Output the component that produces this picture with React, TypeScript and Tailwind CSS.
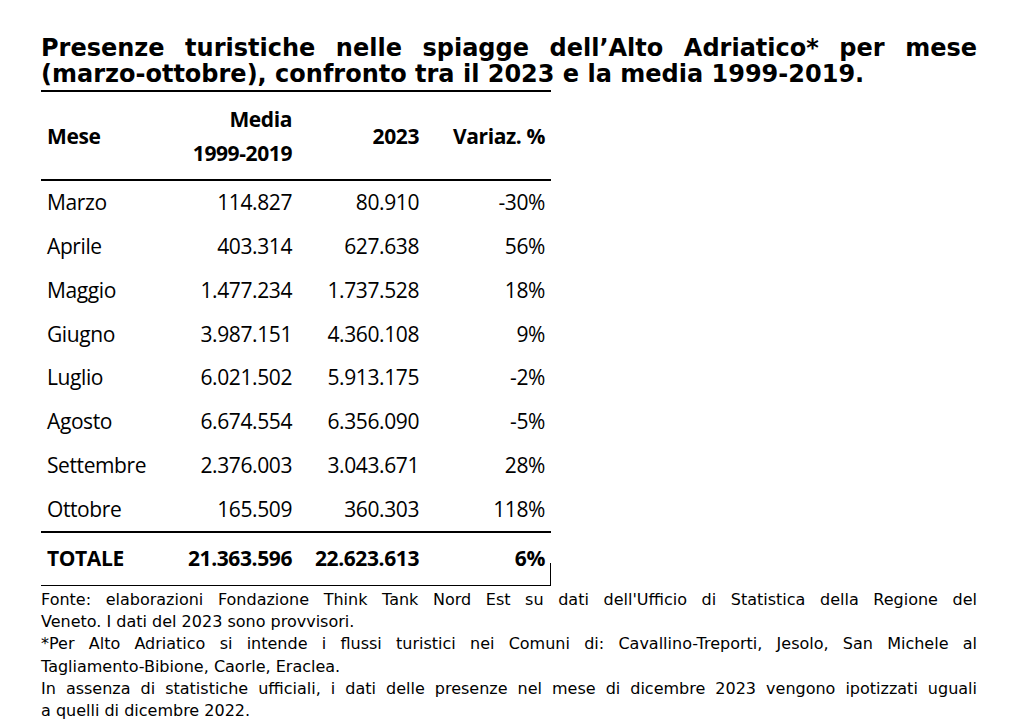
import React from 'react';

interface Riga {
  mese: string;
  media: string;
  anno: string;
  variaz: string;
}

const righe: Riga[] = [
  { mese: 'Marzo', media: '114.827', anno: '80.910', variaz: '-30%' },
  { mese: 'Aprile', media: '403.314', anno: '627.638', variaz: '56%' },
  { mese: 'Maggio', media: '1.477.234', anno: '1.737.528', variaz: '18%' },
  { mese: 'Giugno', media: '3.987.151', anno: '4.360.108', variaz: '9%' },
  { mese: 'Luglio', media: '6.021.502', anno: '5.913.175', variaz: '-2%' },
  { mese: 'Agosto', media: '6.674.554', anno: '6.356.090', variaz: '-5%' },
  { mese: 'Settembre', media: '2.376.003', anno: '3.043.671', variaz: '28%' },
  { mese: 'Ottobre', media: '165.509', anno: '360.303', variaz: '118%' },
];

// righe delle note, spezzate come nell'originale
const note: string[][] = [
  [
    "Fonte: elaborazioni Fondazione Think Tank Nord Est su dati dell'Ufficio di Statistica della Regione del",
    'Veneto. I dati del 2023 sono provvisori.',
  ],
  [
    '*Per Alto Adriatico si intende i flussi turistici nei Comuni di: Cavallino-Treporti, Jesolo, San Michele al',
    'Tagliamento-Bibione, Caorle, Eraclea.',
  ],
  [
    'In assenza di statistiche ufficiali, i dati delle presenze nel mese di dicembre 2023 vengono ipotizzati uguali',
    'a quelli di dicembre 2022.',
  ],
];

const griglia = 'grid grid-cols-[126px_126px_127px_131px]';

export default function App() {
  return (
    <div className="w-[1024px] h-[726px] bg-white text-black overflow-hidden">
      <div className="pl-[41px] pr-[47px] pt-[35px]">
        {/* titolo */}
        <h1 className="font-['DejaVu_Sans',sans-serif] font-bold text-[24px] leading-[26px] text-justify">
          Presenze turistiche nelle spiagge dell’Alto Adriatico* per mese (marzo-ottobre), confronto tra il 2023 e la media 1999-2019.
        </h1>
        <div className="mt-[3px] w-[510px] h-[2px] bg-black" />

        {/* tabella */}
        <div className="w-[510px] font-['Open_Sans',sans-serif] text-[21px] tracking-[-0.4px]">
          <div className={`${griglia} h-[87px] items-center font-bold leading-[34px]`}>
            <div className="pl-[6px]">Mese</div>
            <div className="text-right pr-[1px]">
              Media
              <br />
              1999-2019
            </div>
            <div className="text-right pr-[1px]">2023</div>
            <div className="text-right pr-[6px]">Variaz. %</div>
          </div>
          <div className="h-[2px] bg-black" />

          {righe.map((r) => (
            <div key={r.mese} className={`${griglia} h-[43.8px] items-center`}>
              <div className="pl-[6px]">{r.mese}</div>
              <div className="text-right pr-[1px]">{r.media}</div>
              <div className="text-right pr-[1px]">{r.anno}</div>
              <div className="text-right pr-[6px]">{r.variaz}</div>
            </div>
          ))}
          <div className="h-[1.5px] bg-black" />

          <div className={`${griglia} h-[52px] items-center font-bold`}>
            <div className="pl-[6px]">TOTALE</div>
            <div className="text-right pr-[1px]">21.363.596</div>
            <div className="text-right pr-[1px]">22.623.613</div>
            <div className="relative h-full flex items-center justify-end pr-[6px]">
              6%
              <span className="absolute right-0 bottom-0 h-[22px] w-px bg-black" />
            </div>
          </div>
          <div className="h-px bg-black" />
        </div>

        {/* note */}
        <div className="mt-[3px] font-['DejaVu_Sans',sans-serif] text-[16px] leading-[22.3px]">
          {note.map((par, i) => (
            <div key={i}>
              {par.map((riga, j) => (
                <div
                  key={j}
                  className={j < par.length - 1 ? 'text-justify [text-align-last:justify]' : ''}
                >
                  {riga}
                </div>
              ))}
            </div>
          ))}
        </div>
      </div>
    </div>
  );
}
